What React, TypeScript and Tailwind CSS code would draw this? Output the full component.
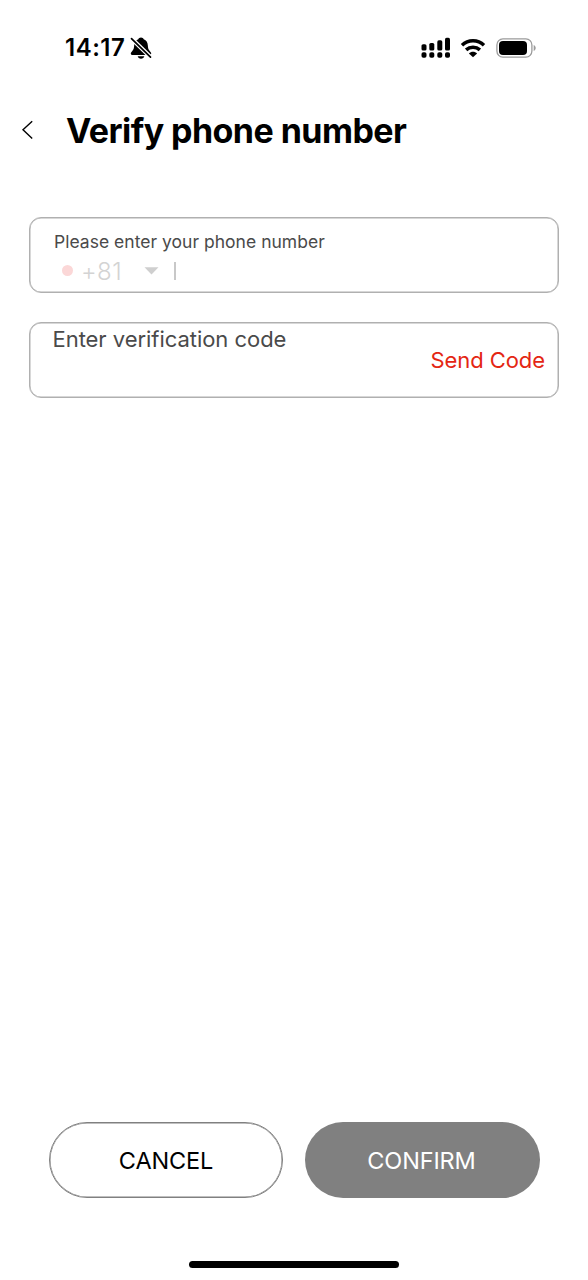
import { useState } from "react";

function BellOffIcon() {
  return (
    <svg className="h-[24px] w-[24px]" viewBox="0 0 24 24">
      <path
        d="M11 1.500c-1.400 0-2.300.7-2.700 1.800C5.600 4.200 4.400 6.500 4.200 9.300c-.2 3.300-.7 4.500-2.100 5.900-.9.900-1.300 1.600-1.300 2.400 0 .9.600 1.500 1.600 1.500h17.200c1 0 1.600-.6 1.600-1.500 0-.8-.4-1.500-1.300-2.400-1.400-1.400-1.900-2.600-2.100-5.900-.2-2.800-1.400-5.100-4.100-6-.4-1.100-1.300-1.800-2.700-1.800Z"
        fill="#000"
      />
      <path d="M7.700 20.300h6.600c-.3 1.500-1.600 2.500-3.300 2.500s-3-1-3.300-2.500Z" fill="#000" />
      <path d="M1.200 2.300 21.300 21.800" stroke="#fff" strokeWidth="4.200" />
      <path d="M1.500 2.600 20.500 21.200" stroke="#000" strokeWidth="1.700" strokeLinecap="round" />
    </svg>
  );
}

function SignalIcon() {
  return (
    <svg className="h-[22px] w-[30px]" viewBox="0 0 30 22" fill="#000">
      <rect x="0.500" y="7.200" width="5" height="6.300" rx="1.600" />
      <rect x="8.300" y="6" width="5" height="7.500" rx="1.600" />
      <rect x="16.300" y="3.300" width="5" height="10.200" rx="1.600" />
      <rect x="24" y="0.800" width="5" height="12.700" rx="1.600" />
      <rect x="0.500" y="15.200" width="5" height="5.600" rx="1.800" />
      <rect x="8.300" y="15.200" width="5" height="5.600" rx="1.800" />
      <rect x="16.300" y="15.200" width="5" height="5.600" rx="1.800" />
      <rect x="24" y="15.200" width="5" height="5.600" rx="1.800" />
    </svg>
  );
}

function WifiIcon() {
  return (
    <svg className="h-[20px] w-[26px]" viewBox="0 0 26 20" fill="none" stroke="#000" strokeWidth="3.500">
      <path d="M2 7.200C8.200 1.400 17.800 1.400 24 7.200" />
      <path d="M6.100 11.900C10 8.400 16 8.400 19.900 11.900" />
      <path d="M13 19.300 8.900 15.400C11.200 13.300 14.800 13.300 17.100 15.400Z" fill="#000" stroke="none" />
    </svg>
  );
}

function BatteryIcon() {
  return (
    <svg className="h-[20px] w-[40px]" viewBox="0 0 40 20">
      <rect x="0.900" y="0.900" width="35" height="18.200" rx="6" fill="none" stroke="#9b9b9b" strokeWidth="1.300" />
      <rect x="3" y="3" width="28" height="14" rx="4" fill="#000" />
      <path d="M37.700 7v6c1.200-.5 2-1.600 2-3s-.8-2.500-2-3Z" fill="#9b9b9b" />
    </svg>
  );
}

function StatusBar() {
  return (
    <div className="flex h-[95px] items-center justify-between pr-[52px] pl-[65px]">
      <div className="flex items-center gap-[5px]">
        <span className="pt-px text-[24px] leading-[30px] font-semibold tracking-[0.500px]">14:17</span>
        <BellOffIcon />
      </div>
      <div className="flex items-center">
        <SignalIcon />
        <span className="ml-[9px] flex">
          <WifiIcon />
        </span>
        <span className="ml-[10px] flex">
          <BatteryIcon />
        </span>
      </div>
    </div>
  );
}

export default function App() {
  const [code] = useState("+81");

  return (
    <div className="flex h-[1280px] w-[588px] flex-col bg-white font-['Inter',sans-serif] text-black">
      <StatusBar />

      <header className="flex h-[70px] items-center pl-[21px]">
        <button className="flex" aria-label="Back">
          <svg className="h-[20px] w-[12px]" viewBox="0 0 12 20" fill="none" stroke="#000" strokeWidth="1.400">
            <path d="M11.200 1.200 2 9.800 11.200 18.600" />
          </svg>
        </button>
        <h1 className="ml-[33px] pt-[2px] text-[34px] leading-[42px] font-bold tracking-[-0.550px]">
          Verify phone number
        </h1>
      </header>

      <main className="mt-[52px] flex flex-col gap-[29px] px-[29px]">
        {/* Phone number */}
        <div className="h-[76px] rounded-[12px] border border-[#b0b0b0] pt-[13px] pl-[24px] shadow-[inset_0_0_0_0.500px_#b0b0b0]">
          <div className="text-[17.500px] leading-[22px] tracking-[0.020px] text-[#4a4a4a]">
            Please enter your phone number
          </div>
          <div className="flex h-[36px] items-center pl-[8px] text-[#d3d3d3]">
            <span className="mb-[2px] h-[11px] w-[11px] rounded-full bg-[#fbd7d7]" />
            <span className="ml-[8px] w-[43px] pt-[2px] text-[24px] leading-[28px] font-light tracking-[0.400px]">
              {code}
            </span>
            <svg className="ml-[20px] h-[8px] w-[15px]" viewBox="0 0 15 8" fill="#cfcfcf">
              <path d="M0.500 0.300h14L7.500 7.500Z" />
            </svg>
            <span className="ml-[15px] h-[18px] w-[1.500px] bg-[#c8c8c8]" />
          </div>
        </div>

        {/* Verification code */}
        <div className="flex h-[76px] justify-between rounded-[12px] border border-[#b0b0b0] pr-[13px] pl-[22px] shadow-[inset_0_0_0_0.500px_#b0b0b0]">
          <div className="pt-[2px] pl-[0.500px] text-[22px] leading-[28px] tracking-[-0.040px] text-[#4a4a4a]">
            Enter verification code
          </div>
          <button className="text-[22px] tracking-[-0.080px] text-[#e42613]">Send Code</button>
        </div>
      </main>

      <footer className="mt-auto flex flex-col items-center">
        <div className="flex w-full gap-[22px] pr-[48px] pl-[49px]">
          <button className="h-[76px] w-[234px] rounded-full border border-[#808080] pt-[2px] text-[23.500px] tracking-[-0.150px] shadow-[inset_0_0_0_0.500px_#808080]">
            CANCEL
          </button>
          <button className="h-[76px] flex-1 rounded-full bg-[#808080] pt-[2px] pr-[2px] text-[23.500px] tracking-[-0.150px] text-white">
            CONFIRM
          </button>
        </div>
        <div className="mt-[63px] mb-[12px] h-[7px] w-[210px] rounded-full bg-black" />
      </footer>
    </div>
  );
}
